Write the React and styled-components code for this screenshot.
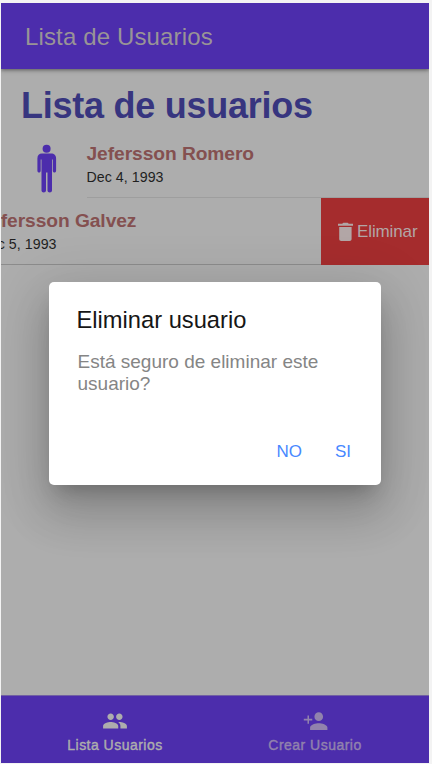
import React from "react";
import styled, { createGlobalStyle } from "styled-components";

const Global = createGlobalStyle`
  * { box-sizing: border-box; }
  body { margin: 0; background: #f3f3f3; font-family: "Liberation Sans", Arial, sans-serif; }
`;

const Screen = styled.div`
  position: relative;
  display: flex;
  flex-direction: column;
  width: 428px;
  height: 760px;
  margin: 3px 3px 0 1px;
  background: #adadad;
  overflow: hidden;
`;

const Toolbar = styled.header`
  flex: none;
  display: flex;
  align-items: center;
  height: 66px;
  padding: 2px 24px 0;
  background: #4c2dac;
  box-shadow: 0 1px 4px rgba(0, 0, 0, 0.5);
  color: #999496;
  font-size: 24px;
  letter-spacing: 0.14px;
`;

const Content = styled.main`
  flex: 1;
  overflow: hidden;
`;

const Heading = styled.h1`
  margin: 0;
  padding: 16px 0 0 20px;
  color: #37357f;
  font-size: 36px;
  line-height: 41px;
  letter-spacing: -0.25px;
`;

const Row = styled.div`
  display: flex;
  height: ${(p) => (p.$open ? 67 : 72)}px;
`;

const Item = styled.div`
  flex: none;
  display: flex;
  width: 428px;
  margin-left: ${(p) => (p.$open ? -108 : 0)}px;
`;

const Avatar = styled.div`
  flex: none;
  width: ${(p) => (p.$open ? 86.5 : 85.5)}px;
  padding: 18px 0 0 36px;
`;

const Details = styled.div`
  flex: 1;
  border-bottom: 1px solid ${(p) => (p.$open ? "#8c8c8c" : "#9e9e9e")};
  padding-top: ${(p) => (p.$open ? 11 : 16)}px;
`;

const Name = styled.h2`
  margin: 0;
  color: #845050;
  font-size: 19.2px;
  line-height: 24px;
  letter-spacing: -0.06px;
`;

const Birth = styled.p`
  margin: 0;
  padding-top: 2px;
  color: #1f1f1f;
  font-size: 14.2px;
  line-height: 18px;
  letter-spacing: 0.05px;
`;

const DeleteButton = styled.button`
  flex: none;
  display: flex;
  align-items: center;
  width: 108px;
  border: 0;
  padding: 1px 0 0 16px;
  background: #a52c2d;
  color: #b2a6a6;
  font: 17px "Liberation Sans", Arial, sans-serif;
  letter-spacing: -0.12px;
  gap: 3px;
`;

const Tabs = styled.nav`
  flex: none;
  display: grid;
  grid-template-columns: 1fr 1fr;
  height: 68px;
  padding: 0 14px;
  border-top: 1px solid #7160a3;
  background: #4c2dac;
`;

const Tab = styled.div`
  display: flex;
  flex-direction: column;
  align-items: center;
  padding-top: 12px;
  color: ${(p) => (p.$active ? "#adadad" : "#9182ad")};
  font-size: 14px;
  line-height: 18px;
  letter-spacing: 0.48px;
  -webkit-text-stroke: 0.4px currentColor;

  svg { display: block; margin-bottom: 2px; }
`;

const Dialog = styled.section`
  position: absolute;
  left: 47.5px;
  top: 278.5px;
  width: 332.5px;
  height: 203.5px;
  display: flex;
  flex-direction: column;
  border-radius: 5px;
  background: #fff;
  box-shadow: 0 13px 18px -8px rgba(0, 0, 0, 0.2), 0 28px 45px 4px rgba(0, 0, 0, 0.14),
    0 11px 54px 9px rgba(0, 0, 0, 0.12);
  padding: 24.5px 28px 0;
`;

const DialogTitle = styled.h3`
  margin: 0;
  color: #161616;
  font-size: 23.7px;
  font-weight: 400;
  line-height: 28px;
`;

const Message = styled.p`
  flex: none;
  margin: 0;
  padding: 17px 0 0 1px;
  color: #858585;
  font-size: 19px;
  line-height: 22px;
`;

const Actions = styled.div`
  display: flex;
  justify-content: flex-end;
  gap: 33px;
  margin-top: 46px;
  padding-right: 2px;
`;

const Action = styled.button`
  border: 0;
  padding: 0;
  background: none;
  color: #4888ff;
  font: 17px/22px "Liberation Sans", Arial, sans-serif;
`;

const ManIcon = () => (
  <svg width="20" height="49" viewBox="0 0 20 49" fill="#4c2dac">
    <circle cx="9.6" cy="4.7" r="4" />
    <path d="M5 9.6h9.2c2.9 0 4.9 2 4.9 4.8v12.4c0 2.4-3.3 2.4-3.3 0V15.4h-.8v31.2c0 2.5-4.5 2.5-4.5 0V28.4H9v18.2c0 2.5-4.5 2.5-4.5 0V15.4h-.8v11.4c0 2.4-3.3 2.4-3.3 0V14.4c0-2.8 1.8-4.8 4.6-4.8z" />
  </svg>
);

const TrashIcon = () => (
  <svg width="17" height="20" viewBox="0 0 17 20" fill="#b2a6a6">
    <path d="M1 1.8h4.2L6.3.7h4.4l1.1 1.1H16v2H1zM2.2 4.9h12.4v12c0 1.2-.8 2-2 2H4.2c-1.2 0-2-.8-2-2z" />
  </svg>
);

const PeopleIcon = () => (
  <svg width="26" height="26" viewBox="0 0 24 24" fill="currentColor">
    <path d="M16 11c1.66 0 2.99-1.34 2.99-3S17.66 5 16 5s-3 1.34-3 3 1.34 3 3 3zm-8 0c1.66 0 2.99-1.34 2.99-3S9.66 5 8 5 5 6.34 5 8s1.34 3 3 3zm0 2c-2.33 0-7 1.17-7 3.5V19h14v-2.5c0-2.33-4.67-3.5-7-3.5zm8 0c-.29 0-.62.02-.97.05 1.16.84 1.97 1.97 1.97 3.45V19h6v-2.5c0-2.33-4.67-3.5-7-3.5z" />
  </svg>
);

const PersonAddIcon = () => (
  <svg width="27" height="26" viewBox="0 0 24 24" fill="currentColor">
    <path d="M15 12c2.21 0 4-1.79 4-4s-1.79-4-4-4-4 1.79-4 4 1.79 4 4 4zm-9-2V7H4.6v3H1.2v1.6h3.4v3H6v-3h3V10H6zm9 4c-2.67 0-8 1.34-8 4v2.4h16V18c0-2.66-5.33-4-8-4z" />
  </svg>
);

function User({ name, date, open }) {
  return (
    <Row $open={open}>
      <Item $open={open}>
        <Avatar $open={open}><ManIcon /></Avatar>
        <Details $open={open}>
          <Name>{name}</Name>
          <Birth>{date}</Birth>
        </Details>
      </Item>
      {open && <DeleteButton><TrashIcon />Eliminar</DeleteButton>}
    </Row>
  );
}

export default function App() {
  return (
    <>
      <Global />
      <Screen>
        <Toolbar>Lista de Usuarios</Toolbar>
        <Content>
          <Heading>Lista de usuarios</Heading>
          <User name="Jefersson Romero" date="Dec 4, 1993" />
          <User name="Jefersson Galvez" date="Dec 5, 1993" open />
        </Content>
        <Tabs>
          <Tab $active><PeopleIcon />Lista Usuarios</Tab>
          <Tab><PersonAddIcon />Crear Usuario</Tab>
        </Tabs>
        <Dialog role="dialog">
          <DialogTitle>Eliminar usuario</DialogTitle>
          <Message>Está seguro de eliminar este usuario?</Message>
          <Actions>
            <Action>NO</Action>
            <Action>SI</Action>
          </Actions>
        </Dialog>
      </Screen>
    </>
  );
}
